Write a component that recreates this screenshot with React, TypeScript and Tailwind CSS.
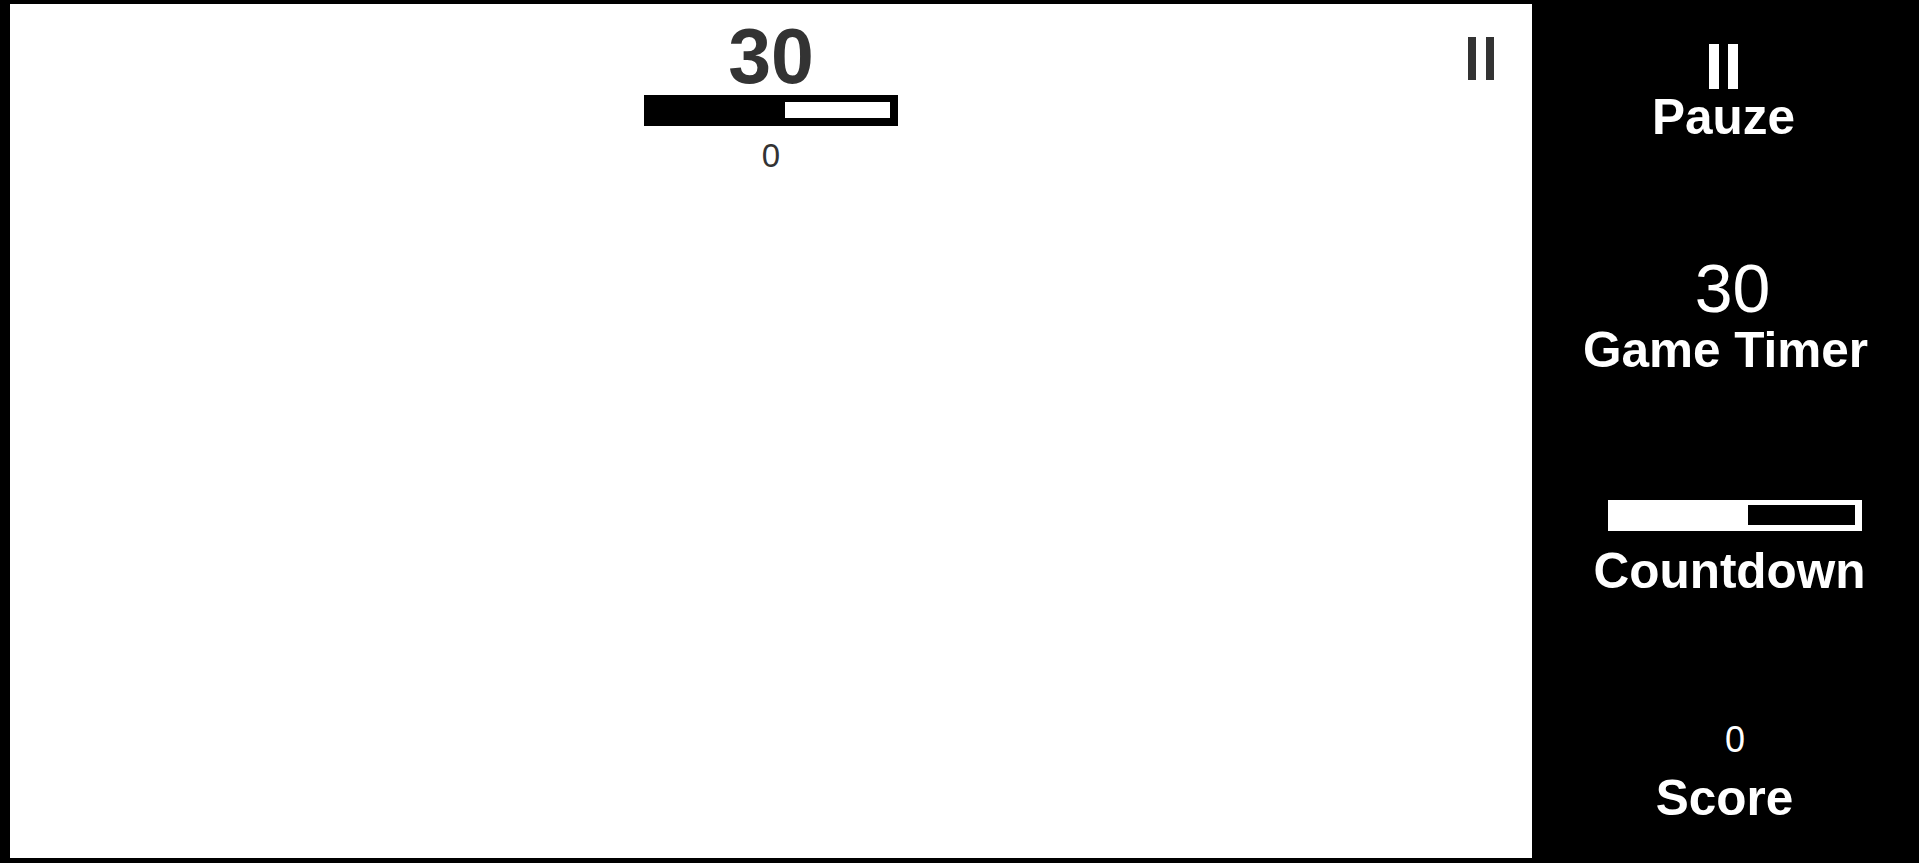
import React from 'react';

const font = "font-['Liberation_Sans',Arial,sans-serif]";

function PauseIcon({ barClass, gapClass }: { barClass: string; gapClass: string }) {
  return (
    <div className={`flex ${gapClass}`}>
      <div className={barClass} />
      <div className={barClass} />
    </div>
  );
}

function Countdown({ frame, used, track }: { frame: string; used: string; track: string }) {
  return (
    <div className={`w-[254px] h-[31px] pl-[7px] flex ${frame}`}>
      <div className={used} />
      <div className={`flex-1 ${track}`} />
    </div>
  );
}

function Label({ children }: { children: React.ReactNode }) {
  return <div className="text-[49.5px] leading-[56px] font-bold text-center">{children}</div>;
}

export default function App() {
  return (
    <div className={`${font} w-[1919px] h-[863px] bg-black flex overflow-hidden`}>
      <div className="ml-[10px] mt-[4px] mb-[5px] w-[1522px] bg-white relative flex flex-col items-center text-[#333]">
        <div className="text-[77px] leading-[76px] font-bold mt-[14px] h-[77px]">30</div>
        <Countdown frame="bg-black pt-[7px] pr-[8px] pb-[8px]" used="w-[134px]" track="bg-white" />
        <div className="text-[33px] leading-[36px] mt-[12px]">0</div>
        <div className="absolute right-[38px] top-[33px]">
          <PauseIcon barClass="w-[8px] h-[43px] bg-[#333]" gapClass="gap-[10px]" />
        </div>
      </div>

      <div className="w-[387px] text-white flex flex-col items-center">
        <div className="mt-[44px] mr-[4px] flex flex-col items-center">
          <PauseIcon barClass="w-[10px] h-[45px] bg-white" gapClass="gap-[9px]" />
          <div><Label>Pauze</Label></div>
        </div>

        <div className="mt-[103px] flex flex-col items-center">
          <div className="text-[68px] leading-[80px] ml-[14px] h-[74px]">30</div>
          <Label>Game Timer</Label>
        </div>

        <div className="mt-[122px] flex flex-col items-center">
          <div className="ml-[19px]">
            <Countdown frame="bg-white pt-[5px] pr-[7px] pb-[6px]" used="w-[133px]" track="bg-black" />
          </div>
          <div className="mt-[12px] ml-[8px]"><Label>Countdown</Label></div>
        </div>

        <div className="mt-[121px] flex flex-col items-center">
          <div className="text-[36px] leading-[40px] ml-[19px]">0</div>
          <div className="mt-[10px] mr-[2px]"><Label>Score</Label></div>
        </div>
      </div>
    </div>
  );
}
